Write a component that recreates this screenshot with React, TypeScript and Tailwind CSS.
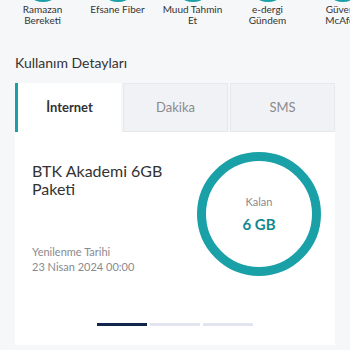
import React from 'react';

const shortcuts = [
  { label: 'Ramazan Bereketi' },
  { label: 'Efsane Fiber' },
  { label: 'Muud Tahmin Et' },
  { label: 'e-dergi Gündem' },
  { label: 'Güvenli McAfee' },
];

const tabs = ['İnternet', 'Dakika', 'SMS'];

export default function App() {
  const font = { fontFamily: 'Lato, "Open Sans", sans-serif' };

  return (
    <div className="w-[350px] h-[350px] overflow-hidden bg-[#f6f7f9]" style={font}>
      {/* Shortcuts row (scrolled) */}
      <div className="flex pl-[5px] w-max">
        {shortcuts.map((s) => (
          <div key={s.label} className="w-[75px] flex flex-col items-center shrink-0">
            <div className="w-[40px] h-[40px] -mt-[38px] rounded-full bg-[#1aa0a7]"></div>
            <span className="mt-[2px] px-1 text-center text-[10px] leading-[11px] text-[#333]">{s.label}</span>
          </div>
        ))}
      </div>

      <div className="px-[15px]">
        <h2 className="mt-[28px] text-[14px] leading-[18px] text-[#333]">Kullanım Detayları</h2>

        {/* Tabs */}
        <div className="mt-[11px] flex gap-[2px] h-[49px]">
          {tabs.map((t, i) =>
            i === 0 ? (
              <div key={t} className="flex-1 flex items-center justify-center bg-white border-l-[3px] border-[#1aa0a7] text-[13px] font-bold text-[#333]">
                {t}
              </div>
            ) : (
              <div key={t} className="flex-1 flex items-center justify-center bg-[#f1f2f5] border border-[#e6e8ec] text-[13px] text-[#8a8a8e]">
                {t}
              </div>
            )
          )}
        </div>

        {/* Card */}
        <div className="bg-white h-[213px] flex flex-col">
          <div className="flex pl-[17px] pr-[14px] pt-[30px]">
            <div className="flex-1 flex flex-col">
              <div className="text-[16px] leading-[18px] text-[#333] w-[140px]">BTK Akademi 6GB Paketi</div>
              <div className="mt-[46px] text-[11px] leading-[15px] text-[#8a8a8e]">Yenilenme Tarihi</div>
              <div className="text-[11px] leading-[15px] text-[#8a8a8e]">23 Nisan 2024 00:00</div>
            </div>
            <div className="w-[124px] h-[124px] -mt-[10px] rounded-full border-[9px] border-[#1aa0a7] flex flex-col items-center justify-center">
              <span className="text-[11px] text-[#8a8a8e] leading-[14px]">Kalan</span>
              <span className="mt-[6px] text-[15px] font-bold text-[#16878e] leading-[18px]">6 GB</span>
            </div>
          </div>
          <div className="mt-auto mb-[19px] flex justify-center gap-[3px]">
            <div className="w-[50px] h-[3px] bg-[#10264b]"></div>
            <div className="w-[50px] h-[3px] bg-[#e2e5ef]"></div>
            <div className="w-[50px] h-[3px] bg-[#e2e5ef]"></div>
          </div>
        </div>
      </div>
    </div>
  );
}
